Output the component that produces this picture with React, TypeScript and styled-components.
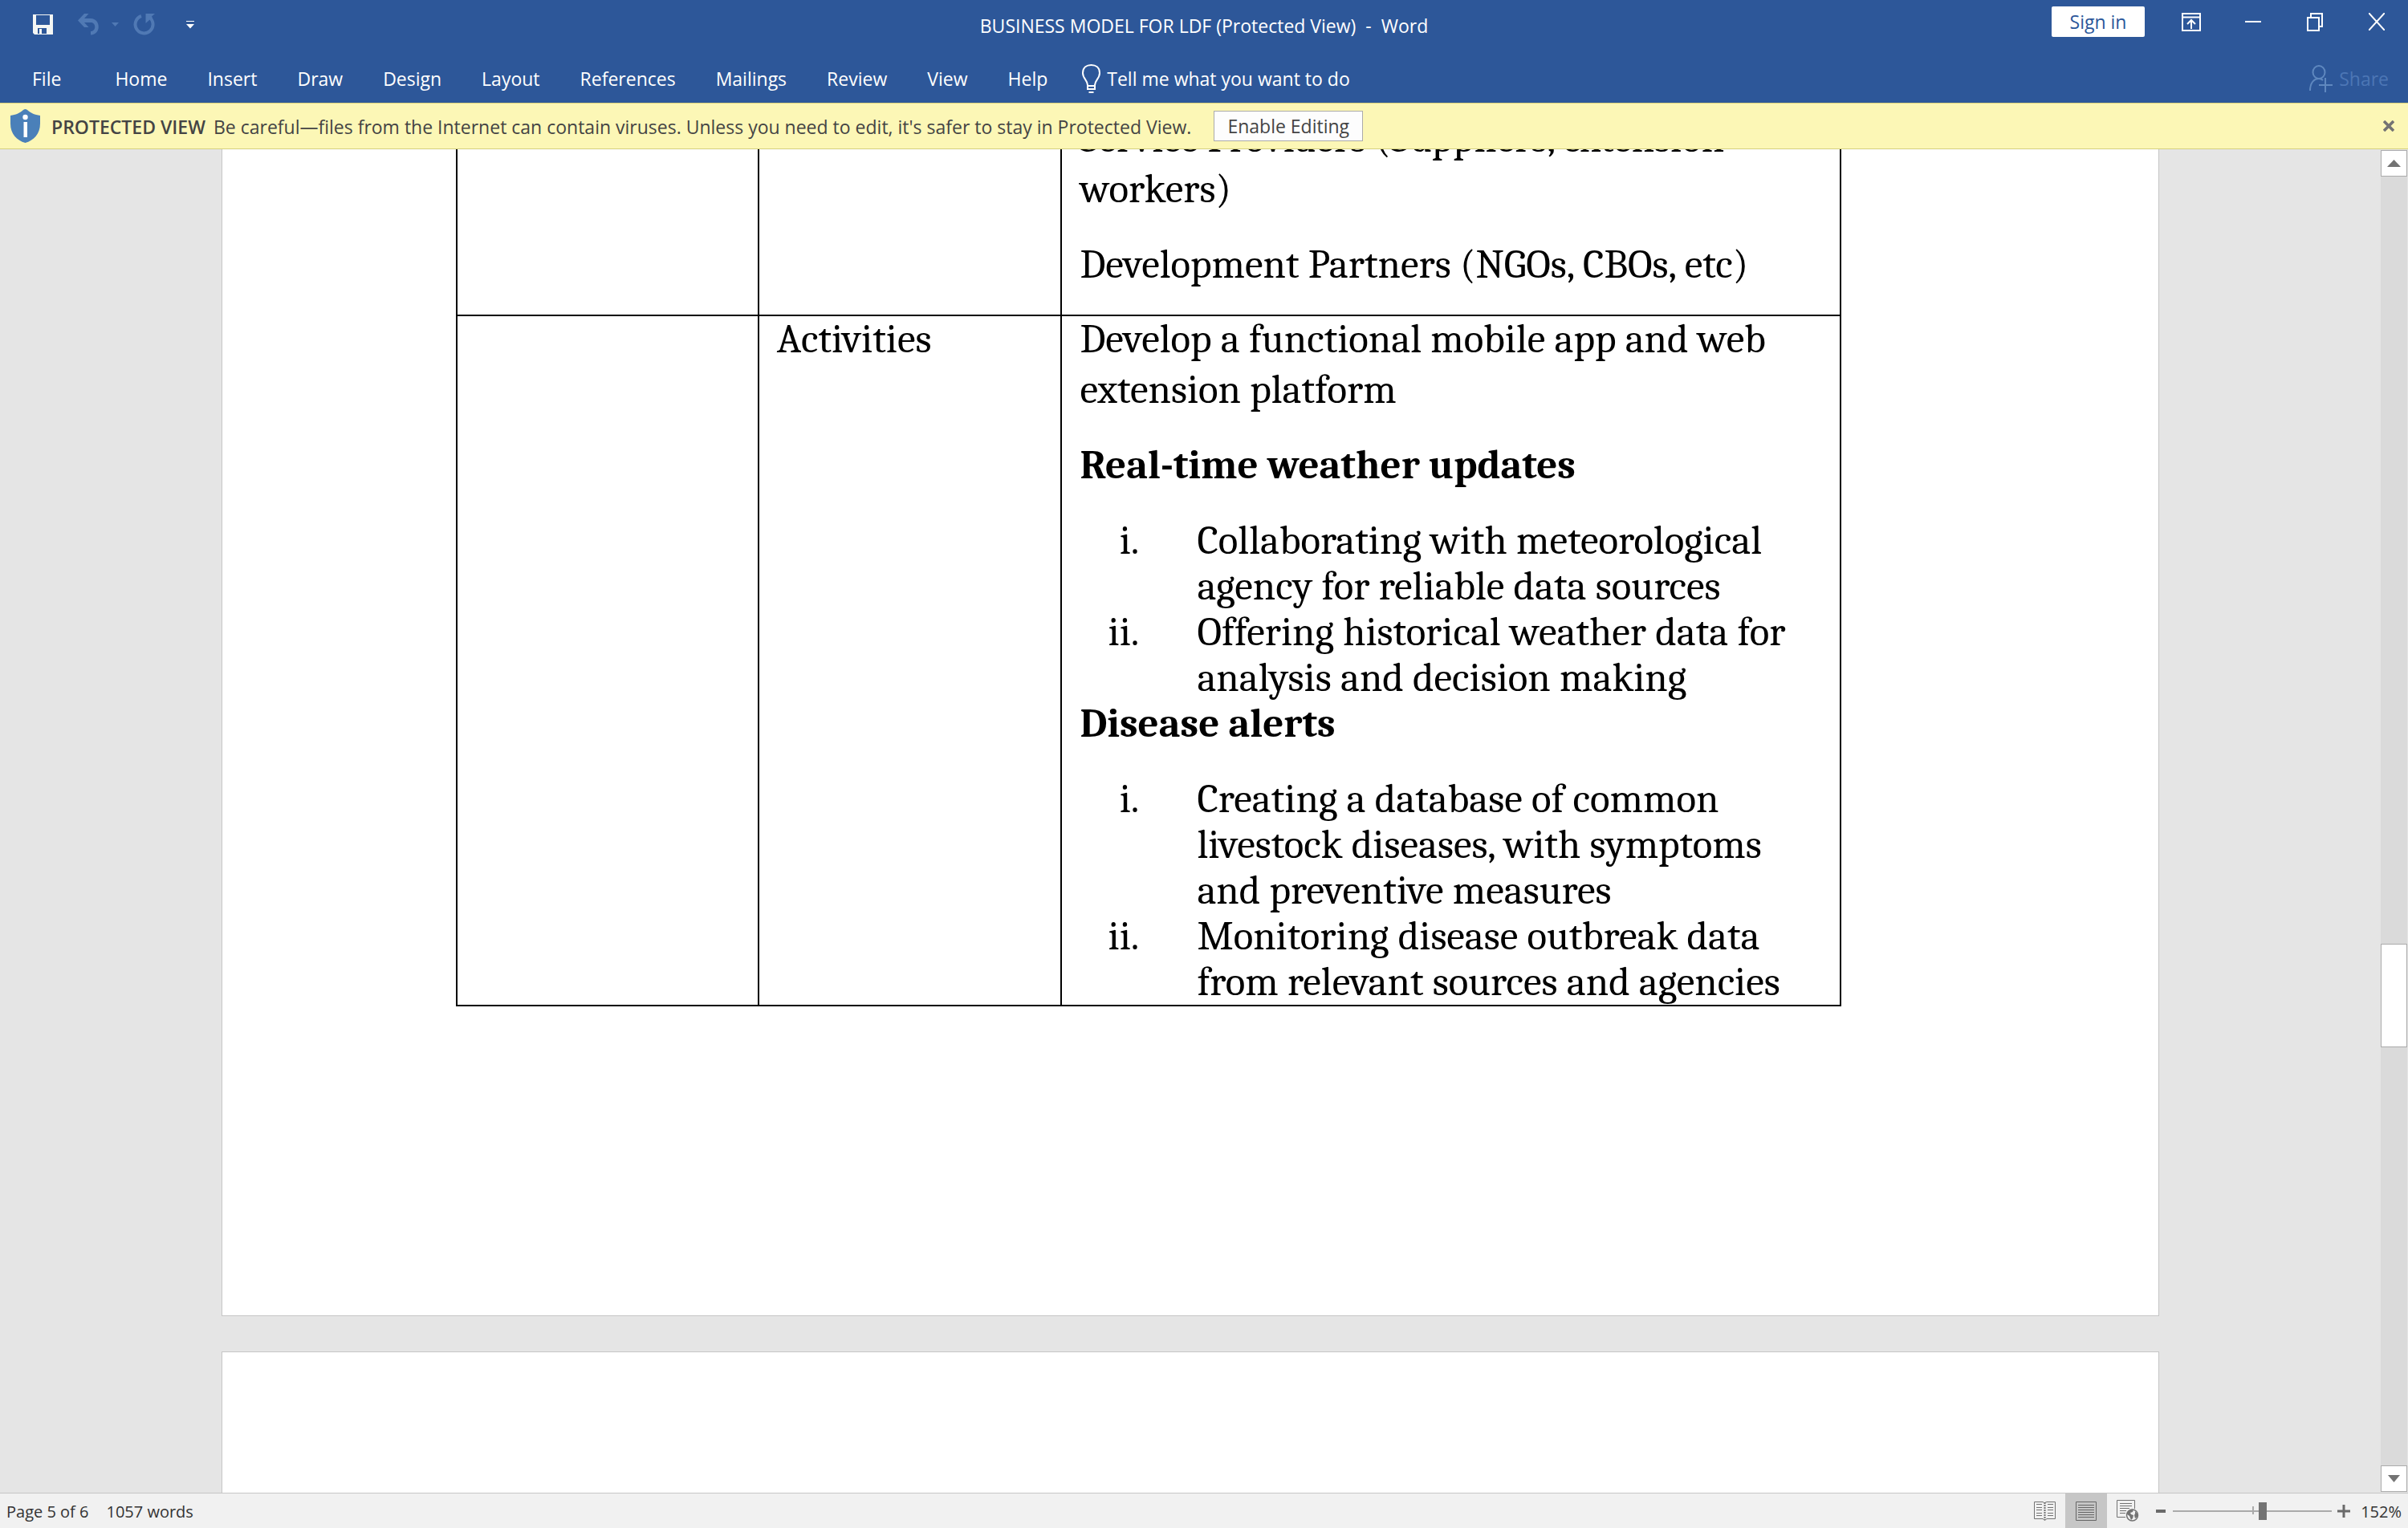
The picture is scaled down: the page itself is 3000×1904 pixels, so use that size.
import React from 'react';
import styled, { createGlobalStyle } from 'styled-components';

const ui = '"Segoe UI", "Open Sans", "Noto Sans", sans-serif';
const serif = 'Cambria, Caladea, "Liberation Serif", serif';

const GlobalStyle = createGlobalStyle`
  * { box-sizing: border-box; }
  html, body, #root { height: 100%; }
  body { margin: 0; font-family: ${ui}; font-size: 23px; }
  button { font: inherit; color: inherit; background: none; border: 0; padding: 0; margin: 0; }
  svg { display: block; }
`;

const Window = styled.div`
  display: flex;
  flex-direction: column;
  height: 100vh;
  overflow: hidden;
  background: #e5e5e5;
`;

const TitleBar = styled.header`
  display: grid;
  grid-template-columns: 1fr auto 1fr;
  flex: none;
  height: 66px;
  background: #2d5799;
  color: #fff;
`;

const QuickAccess = styled.div`
  display: flex;
  align-items: center;
  height: 61px;
  padding-left: 41px;
`;

const QuickButton = styled.button<{ $gap?: number; $dim?: boolean }>`
  margin-right: ${p => p.$gap ?? 0}px;
  color: ${p => (p.$dim ? '#5079b4' : '#fff')};
`;

const Title = styled.h1`
  margin: 0;
  font-size: 23px;
  font-weight: 400;
  line-height: 64px;
  white-space: pre;
`;

const WindowControls = styled.div`
  display: flex;
  align-items: center;
  justify-content: flex-end;
  height: 54px;
  padding-right: 1px;
`;

const SignIn = styled.button`
  width: 116px;
  height: 38px;
  margin-right: 19px;
  background: #fff;
  border-radius: 2px;
  color: #2b579a;
  line-height: 38px;
`;

const ControlButton = styled.button`
  display: grid;
  place-items: center;
  width: 77px;
  height: 54px;
`;

const Ribbon = styled.nav`
  display: flex;
  align-items: center;
  flex: none;
  height: 62px;
  padding-top: 2px;
  background: #2d5799;
  color: #fff;
`;

const Tab = styled.button<{ $file?: boolean }>`
  height: 60px;
  padding: ${p => (p.$file ? '0 42px 0 40px' : '0 25px')};
  line-height: 60px;
`;

const TellMe = styled.button`
  display: flex;
  align-items: center;
  gap: 8px;
  margin-left: 18px;
  line-height: 60px;
`;

const Share = styled.button`
  display: flex;
  align-items: center;
  gap: 8px;
  margin-left: auto;
  padding-right: 24px;
  color: #4c76b5;
  line-height: 60px;
`;

const Banner = styled.section`
  display: flex;
  align-items: center;
  flex: none;
  height: 58px;
  padding: 0 17px 0 13px;
  border-top: 1px solid #d9d27c;
  border-bottom: 1px solid #d5d07e;
  background: #fcf7b6;
  color: #444;
`;

const BannerTitle = styled.strong`
  margin: 0 10px 0 14px;
  padding-top: 2px;
  font-weight: 600;
`;

const BannerText = styled.p`
  margin: 0;
  padding-top: 2px;
`;

const EnableButton = styled.button`
  height: 38px;
  width: 186px;
  margin-left: 28px;
  border: 1px solid #ababab;
  background: #fdfdfd;
  line-height: 36px;
`;

const CloseBanner = styled.button`
  margin-left: auto;
`;

const Workspace = styled.div`
  display: flex;
  flex: 1;
  min-height: 0;
`;

const Canvas = styled.main`
  display: flex;
  flex-direction: column;
  align-items: center;
  gap: 44px;
  flex: 1;
  overflow: hidden;
`;

const Page = styled.article<{ $scrolled?: boolean }>`
  flex: none;
  width: 100%;
  max-width: 2414px;
  min-height: 1499px;
  margin-top: ${p => (p.$scrolled ? -45 : 0)}px;
  padding: 0 395px 0 291px;
  border: 1px solid #c6c6c6;
  background: #fff;
`;

const Table = styled.table`
  width: 100%;
  border-collapse: collapse;
  table-layout: fixed;
  color: #000;
  font-family: ${serif};
  font-size: 51px;
`;

const Cell = styled.td`
  padding: 0 22px;
  border: 2px solid #000;
  vertical-align: top;
  & > p:last-child { margin-bottom: 31px; }
`;

const Paragraph = styled.p`
  margin: -3px 0 34px;
  line-height: 63px;
`;

const Heading = styled(Paragraph)`
  font-weight: 700;
`;

const List = styled.ol`
  margin: 0;
  padding: 0;
  list-style: none;
  line-height: 57px;
`;

const Item = styled.li`
  display: grid;
  grid-template-columns: 74px 1fr;
  column-gap: 72px;
`;

const Numeral = styled.span`
  text-align: right;
`;

const ScrollBar = styled.div`
  display: flex;
  flex-direction: column;
  flex: none;
  width: 34px;
  padding: 1px 1px 1px 0;
`;

const ScrollButton = styled.button`
  display: grid;
  place-items: center;
  height: 33px;
  border: 1px solid #ababab;
  background: #fff;
`;

const ScrollTrack = styled.div`
  display: grid;
  grid-template-rows: 956fr 129px 521fr;
  flex: 1;
  background: #dadada;
`;

const ScrollThumb = styled.div`
  grid-row: 2;
  border: 1px solid #ababab;
  background: #fff;
`;

const StatusBar = styled.footer`
  display: flex;
  align-items: center;
  flex: none;
  height: 44px;
  padding: 0 8px;
  border-top: 1px solid #c6c6c6;
  background: #f1f1f1;
  color: #333;
  font-size: 20px;
`;

const StatusText = styled.span`
  margin-right: 22px;
  padding-top: 2px;
`;

const ViewButtons = styled.div`
  display: flex;
  height: 43px;
  margin-left: auto;
`;

const ViewButton = styled.button<{ $active?: boolean }>`
  display: grid;
  place-items: center;
  width: 52px;
  background: ${p => (p.$active ? '#c6c6c6' : 'none')};
`;

const ZoomButton = styled.button`
  display: grid;
  place-items: center;
  width: 30px;
  height: 43px;
`;

const ZoomTrack = styled.label`
  position: relative;
  display: flex;
  align-items: center;
  width: 198px;
  height: 43px;
  &::before {
    content: '';
    position: absolute;
    left: 50%;
    top: 16px;
    width: 2px;
    height: 10px;
    background: #ababab;
  }
`;

const ZoomRange = styled.input`
  position: relative;
  appearance: none;
  width: 100%;
  height: 22px;
  margin: 0;
  background: linear-gradient(#ababab, #ababab) center / 100% 2px no-repeat;
  &::-webkit-slider-thumb {
    appearance: none;
    width: 10px;
    height: 22px;
    background: #737373;
  }
`;

const ZoomValue = styled.button`
  width: 57px;
  padding-top: 2px;
  text-align: right;
`;

const tabs = ['Home', 'Insert', 'Draw', 'Design', 'Layout', 'References', 'Mailings', 'Review', 'View', 'Help'];

const weather = [
  'Collaborating with meteorological agency for reliable data sources',
  'Offering historical weather data for analysis and decision making',
];

const disease = [
  'Creating a database of common livestock diseases, with symptoms and preventive measures',
  'Monitoring disease outbreak data from relevant sources and agencies',
];

const numerals = ['i.', 'ii.'];

function RomanList({ items }: { items: string[] }) {
  return (
    <List>
      {items.map((text, i) => (
        <Item key={text}>
          <Numeral>{numerals[i]}</Numeral>
          <span>{text}</span>
        </Item>
      ))}
    </List>
  );
}

const SaveIcon = () => (
  <svg width="25" height="25" viewBox="0 0 25 25">
    <path fill="#f4f6f4" fillRule="evenodd" d="M0 0h25v25H2l-2-2zM4 1v12h17V1zM6 17v7h2v-6h3v6h6v-7z" />
  </svg>
);

const UndoIcon = () => (
  <svg width="27" height="27" viewBox="0 0 27 27" fill="currentColor">
    <path d="M0 8.500 8 0h5.500L8 6h8c13 0 13 20.500 0 20.500V22c7 0 7-11 0-11H8l5.500 6H8z" />
  </svg>
);

const RedoIcon = () => (
  <svg width="28" height="27" viewBox="0 0 28 27" fill="none">
    <path stroke="currentColor" strokeWidth="4" d="M10 3A11 11 0 1 0 20 4.500" />
    <path fill="currentColor" d="M15.500 0H27l-4 3.500 1 2-4 2.500-4.500 4z" />
  </svg>
);

const Triangle = ({ w, h, up, fill = '#737373' }: { w: number; h: number; up?: boolean; fill?: string }) => (
  <svg width={w} height={h} viewBox="0 0 10 10" preserveAspectRatio="none">
    <path fill={fill} d={up ? 'M0 10 5 0l5 10z' : 'M0 0h10L5 10z'} />
  </svg>
);

const CustomizeIcon = () => (
  <svg width="10" height="10" viewBox="0 0 10 10" fill="#fff">
    <path d="M0 0h10v1H0zM0 4h10L5 9.500z" />
  </svg>
);

const RibbonIcon = () => (
  <svg width="24" height="23" viewBox="0 0 24 23" fill="none" stroke="#fff" strokeWidth="2">
    <path d="M1 1h22v21H1zM1 5.500h22M12 20V9M7 14l5-5 5 5" />
  </svg>
);

const MinimizeIcon = () => (
  <svg width="20" height="2" viewBox="0 0 20 2"><path fill="#fff" d="M0 0h20v2H0z" /></svg>
);

const RestoreIcon = () => (
  <svg width="20" height="23" viewBox="0 0 20 23" fill="none" stroke="#fff" strokeWidth="2">
    <path d="M1 6h14v16H1zM5 6V1h14v16h-4" />
  </svg>
);

const CloseIcon = () => (
  <svg width="20" height="22" viewBox="0 0 20 22" fill="none" stroke="#fff" strokeWidth="2">
    <path d="m0 0 20 22M20 0 0 22" />
  </svg>
);

const BulbIcon = () => (
  <svg width="23" height="36" viewBox="0 0 23 36" fill="none" stroke="#fff" strokeWidth="2">
    <path d="M7 26c0-6-6-8-6-15C1 4 6 1 11.500 1S22 4 22 11c0 7-6 9-6 15v5H7zM7 27h9M8.500 35h6" />
  </svg>
);

const ShareIcon = () => (
  <svg width="29" height="34" viewBox="0 0 29 34" fill="none" stroke="#5f88bf" strokeWidth="2">
    <ellipse cx="12" cy="9" rx="7.500" ry="8" />
    <path d="M1 32c0-10 5-15 11-15 2 0 4 1 5 2M20 16v18M12 25h17" />
  </svg>
);

const ShieldIcon = () => (
  <svg width="37" height="42" viewBox="0 0 37 42">
    <path fill="#4a80b9" d="M16 1q2.500-2 5 0c5 4 9 6 16 7v10c0 13-8 21-18.500 24C8 39 0 31 0 18V8c7-1 11-3 16-7z" />
    <circle cx="18.500" cy="10" r="3.200" fill="#fff" />
    <path fill="#fff" d="M16.500 16H21v19h-4.500z" />
  </svg>
);

const DismissIcon = () => (
  <svg width="14" height="14" viewBox="0 0 14 14" stroke="#737373" strokeWidth="3.600">
    <path d="m1 1 12 12M13 1 1 13" />
  </svg>
);

const ReadIcon = () => (
  <svg width="27" height="26" viewBox="0 0 27 26" fill="none" stroke="#737373">
    <path d="M12.500 2.500 11 1.500H.5v21H11l2.500 2 2.500-2h10.500v-21H16l-2.500 1z" />
    <path strokeWidth="2" strokeDasharray="2 1" d="M13.500 2v22" />
    <path d="M3 4.500h7M3 8.500h7M3 11.500h7M3 15.500h7M3 18.500h7M17 4.500h7M17 8.500h7M17 11.500h7M17 15.500h7M17 18.500h7" />
  </svg>
);

const PrintIcon = () => (
  <svg width="26" height="24" viewBox="0 0 26 24" fill="none" stroke="#666">
    <path d="M.5.5h25v23H.5zM3 4.500h20M3 7.500h20M3 10.500h20M3 13.500h20M3 16.500h20M3 19.500h20" />
  </svg>
);

const WebIcon = () => (
  <svg width="28" height="27" viewBox="0 0 28 27" fill="none" stroke="#737373">
    <path d="M11 21.500H.5V.5h22V11M4 4.500h15M4 7.500h15M4 10.500h12M4 13.500h8M4 16.500h7" />
    <circle cx="19.500" cy="19" r="7" fill="#f1f1f1" strokeWidth="1.500" />
    <path fill="#737373" stroke="none" d="M13 16c2-4 6-5 8-4l-1 3-3 1 1 2 3 1-1 4-2 2-2-5-3-2zM23 14l3 3v4l-3 2-1-4 1-2z" />
  </svg>
);

const MinusIcon = () => (
  <svg width="12" height="4" viewBox="0 0 12 4"><path fill="#6a6a6a" d="M0 0h12v4H0z" /></svg>
);

const PlusIcon = () => (
  <svg width="16" height="16" viewBox="0 0 16 16"><path fill="#6a6a6a" d="M6.500 0h3v6.500H16v3H9.500V16h-3V9.500H0v-3h6.500z" /></svg>
);

export default function App() {
  return (
    <Window>
      <GlobalStyle />
      <TitleBar>
        <QuickAccess>
          <QuickButton $gap={31} aria-label="Save"><SaveIcon /></QuickButton>
          <QuickButton $gap={15} $dim aria-label="Undo"><UndoIcon /></QuickButton>
          <QuickButton $gap={18} $dim aria-label="Undo history"><Triangle w={9} h={5} fill="#5079b4" /></QuickButton>
          <QuickButton $gap={38} $dim aria-label="Repeat"><RedoIcon /></QuickButton>
          <QuickButton aria-label="Customize Quick Access Toolbar"><CustomizeIcon /></QuickButton>
        </QuickAccess>
        <Title>{'BUSINESS MODEL FOR LDF (Protected View)  -  Word'}</Title>
        <WindowControls>
          <SignIn>Sign in</SignIn>
          <ControlButton aria-label="Ribbon Display Options"><RibbonIcon /></ControlButton>
          <ControlButton aria-label="Minimize"><MinimizeIcon /></ControlButton>
          <ControlButton aria-label="Restore Down"><RestoreIcon /></ControlButton>
          <ControlButton aria-label="Close"><CloseIcon /></ControlButton>
        </WindowControls>
      </TitleBar>
      <Ribbon>
        <Tab $file>File</Tab>
        {tabs.map(name => <Tab key={name}>{name}</Tab>)}
        <TellMe><BulbIcon />Tell me what you want to do</TellMe>
        <Share disabled><ShareIcon />Share</Share>
      </Ribbon>
      <Banner>
        <ShieldIcon />
        <BannerTitle>PROTECTED VIEW</BannerTitle>
        <BannerText>
          Be careful—files from the Internet can contain viruses. Unless you need to edit, it's safer to stay in Protected View.
        </BannerText>
        <EnableButton>Enable Editing</EnableButton>
        <CloseBanner aria-label="Close message"><DismissIcon /></CloseBanner>
      </Banner>
      <Workspace>
        <Canvas>
          <Page $scrolled>
            <Table>
              <colgroup>
                <col style={{ width: '21.8%' }} />
                <col style={{ width: '21.9%' }} />
                <col />
              </colgroup>
              <tbody>
                <tr>
                  <Cell />
                  <Cell />
                  <Cell>
                    <Paragraph>Service Providers (Suppliers, extension workers)</Paragraph>
                    <Paragraph>Development Partners (NGOs, CBOs, etc)</Paragraph>
                  </Cell>
                </tr>
                <tr>
                  <Cell />
                  <Cell><Paragraph>Activities</Paragraph></Cell>
                  <Cell>
                    <Paragraph>Develop a functional mobile app and web extension platform</Paragraph>
                    <Heading>Real-time weather updates</Heading>
                    <RomanList items={weather} />
                    <Heading>Disease alerts</Heading>
                    <RomanList items={disease} />
                  </Cell>
                </tr>
              </tbody>
            </Table>
          </Page>
          <Page />
        </Canvas>
        <ScrollBar>
          <ScrollButton aria-label="Scroll up"><Triangle w={17} h={9} up /></ScrollButton>
          <ScrollTrack><ScrollThumb /></ScrollTrack>
          <ScrollButton aria-label="Scroll down"><Triangle w={15} h={9} /></ScrollButton>
        </ScrollBar>
      </Workspace>
      <StatusBar>
        <StatusText>Page 5 of 6</StatusText>
        <StatusText>1057 words</StatusText>
        <ViewButtons>
          <ViewButton aria-label="Read Mode"><ReadIcon /></ViewButton>
          <ViewButton $active aria-label="Print Layout"><PrintIcon /></ViewButton>
          <ViewButton aria-label="Web Layout"><WebIcon /></ViewButton>
        </ViewButtons>
        <ZoomButton aria-label="Zoom out"><MinusIcon /></ZoomButton>
        <ZoomTrack><ZoomRange type="range" aria-label="Zoom" min={0} max={100} defaultValue={57} /></ZoomTrack>
        <ZoomButton aria-label="Zoom in"><PlusIcon /></ZoomButton>
        <ZoomValue>152%</ZoomValue>
      </StatusBar>
    </Window>
  );
}
